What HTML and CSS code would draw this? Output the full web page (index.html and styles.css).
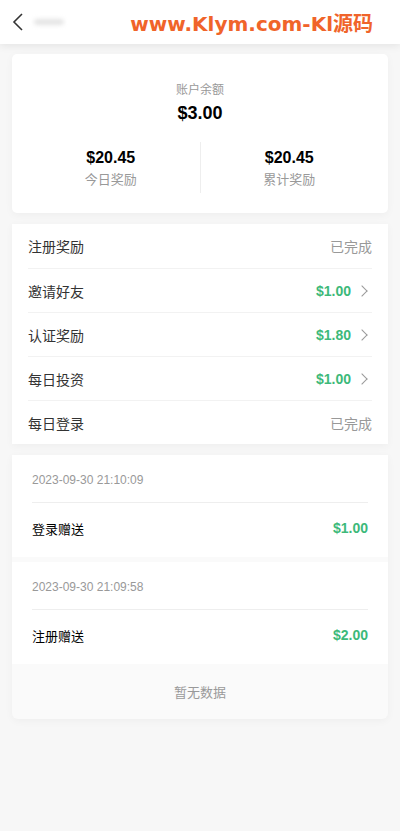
FILE: index.html
```html
<!DOCTYPE html>
<html lang="zh-CN">
<head>
    <meta charset="UTF-8">
    <meta name="viewport" content="width=device-width, initial-scale=1.0">
    <title>奖励中心</title>
    <link rel="stylesheet" href="styles.css">
</head>
<body>

<header class="topbar">
    <span class="back">
        <svg width="12" height="20" viewBox="0 0 12 20"><path d="M10 2 L2 10 L10 18" fill="none" stroke="#333" stroke-width="1.6"/></svg>
    </span>
    <span class="title-blur"></span>
    <span class="brand">www.Klym.com-Kl源码</span>
</header>

<main class="page">
    <section class="card balance">
        <div class="balance-label">账户余额</div>
        <div class="balance-value">$3.00</div>
        <div class="stats">
            <div class="stat">
                <div class="stat-value">$20.45</div>
                <div class="stat-label">今日奖励</div>
            </div>
            <div class="stat">
                <div class="stat-value">$20.45</div>
                <div class="stat-label">累计奖励</div>
            </div>
        </div>
    </section>

    <section class="card tasks">
        <div class="task">
            <span class="task-name">注册奖励</span>
            <span class="done">已完成</span>
        </div>
        <div class="task">
            <span class="task-name">邀请好友</span>
            <span class="reward">$1.00 <i class="arrow"></i></span>
        </div>
        <div class="task">
            <span class="task-name">认证奖励</span>
            <span class="reward">$1.80 <i class="arrow"></i></span>
        </div>
        <div class="task">
            <span class="task-name">每日投资</span>
            <span class="reward">$1.00 <i class="arrow"></i></span>
        </div>
        <div class="task">
            <span class="task-name">每日登录</span>
            <span class="done">已完成</span>
        </div>
    </section>

    <section class="card records">
        <div class="record">
            <div class="record-time">2023-09-30 21:10:09</div>
            <div class="record-row">
                <span>登录赠送</span>
                <span class="record-amount">$1.00</span>
            </div>
        </div>
        <div class="record">
            <div class="record-time">2023-09-30 21:09:58</div>
            <div class="record-row">
                <span>注册赠送</span>
                <span class="record-amount">$2.00</span>
            </div>
        </div>
        <div class="empty">暂无数据</div>
    </section>
</main>

</body>
</html>
```

FILE: styles.css
```css
body {
    margin: 0;
    background: #f7f7f7;
    font-family: "Liberation Sans", "Noto Sans CJK SC", sans-serif;
    color: #333;
}
.topbar {
    height: 44px;
    background: #fff;
    display: flex;
    align-items: center;
    padding: 0 12px;
    box-shadow: 0 2px 8px rgba(0, 0, 0, 0.08);
    position: relative;
}
.back {
    display: flex;
    width: 14px;
}
.title-blur {
    width: 30px;
    height: 6px;
    margin-left: 8px;
    border-radius: 4px;
    background: #e4e4e4;
    filter: blur(2px);
}
.brand {
    margin-left: auto;
    margin-right: 15px;
    color: #f0642a;
    font-family: "DejaVu Sans", "Noto Sans CJK SC", sans-serif;
    font-weight: bold;
    font-size: 20px;
}
.page {
    padding: 10px 12px;
    display: flex;
    flex-direction: column;
    gap: 11px;
}
.card {
    background: #fff;
    border-radius: 5px;
    box-shadow: 0 2px 8px rgba(0, 0, 0, 0.04);
    overflow: hidden;
}
.balance {
    padding: 28px 10px 20px;
    text-align: center;
}
.balance-label {
    font-size: 12px;
    color: #999;
    line-height: 17px;
}
.balance-value {
    font-size: 18px;
    font-weight: bold;
    color: #000;
    margin-top: 3px;
    line-height: 22px;
}
.stats {
    display: flex;
    margin-top: 18px;
}
.stat {
    flex: 1;
    padding: 6px 0 4px;
}
.stat + .stat {
    border-left: 1px solid #eee;
}
.stat-value {
    font-size: 16px;
    font-weight: bold;
    color: #000;
    line-height: 20px;
}
.stat-label {
    font-size: 13px;
    color: #999;
    margin-top: 3px;
    line-height: 18px;
}
.tasks {
    padding: 0 16px;
    border-radius: 0;
}
.task {
    height: 44px;
    box-sizing: border-box;
    display: flex;
    align-items: center;
    justify-content: space-between;
    font-size: 14px;
}
.task + .task {
    border-top: 1px solid #f2f2f2;
}
.task-name {
    color: #333;
}
.done {
    color: #999;
}
.reward {
    color: #3db97a;
    font-weight: bold;
    display: flex;
    align-items: center;
    gap: 7px;
}
.arrow {
    display: inline-block;
    width: 7px;
    height: 7px;
    border-top: 1.5px solid #999;
    border-right: 1.5px solid #999;
    transform: rotate(45deg);
    margin-right: 6px;
}
.records {
    background: #fafafa;
    border-radius: 0 0 6px 6px;
}
.record {
    background: #fff;
    padding: 0 20px;
}
.record + .record {
    margin-top: 5px;
}
.record-time {
    font-size: 12px;
    color: #999;
    height: 47px;
    line-height: 51px;
    border-bottom: 1px solid #eee;
}
.record-row {
    height: 50px;
    padding-bottom: 4px;
    display: flex;
    align-items: center;
    justify-content: space-between;
    font-size: 13px;
    color: #000;
}
.record-amount {
    color: #3db97a;
    font-weight: bold;
    font-size: 14px;
}
.empty {
    height: 55px;
    line-height: 57px;
    text-align: center;
    font-size: 13px;
    color: #999;
}
```
